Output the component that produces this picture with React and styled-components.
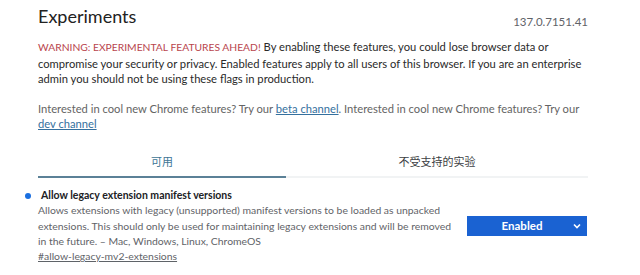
import React from "react";
import styled, { createGlobalStyle } from "styled-components";

const Global = createGlobalStyle`
  html, body { margin: 0; padding: 0; background: #fff; }
  body { font-family: Lato, "Noto Sans CJK SC", sans-serif; color: #202124; }
`;

const Page = styled.div`
  width: 550px;
  padding: 4px 0 0 38px;
`;

const Header = styled.div`
  display: flex;
  justify-content: space-between;
  align-items: flex-start;
`;

const Title = styled.h1`
  margin: 0;
  font-size: 18px;
  font-weight: 400;
  line-height: 24px;
  color: #222;
`;

const Version = styled.span`
  margin-top: 11px;
  font-size: 11.5px;
  line-height: 14px;
  color: #5f6368;
`;

const Para = styled.p`
  margin: ${(p) => p.$mt || 0}px 0 0;
  font-size: 11.2px;
  line-height: ${(p) => p.$lh || 15.5}px;
  color: ${(p) => (p.$muted ? "#646464" : "#2a2a2a")};
`;

const Warn = styled.span`
  font-size: 10.3px;
  color: #b9454d;
`;

const Link = styled.a`
  color: #35709e;
  text-decoration: underline;
`;

const Tabs = styled.div`
  display: flex;
  margin-top: 16.3px;
`;

const Tab = styled.div`
  flex: ${(p) => (p.$active ? "0 0 248px" : "1")};
  text-align: center;
  font-family: "Noto Sans CJK SC", sans-serif;
  font-size: 11px;
  line-height: 16px;
  padding: 6px 0 7px;
  color: ${(p) => (p.$active ? "#3d7595" : "#3c4043")};
  border-bottom: 2px solid ${(p) => (p.$active ? "#5b8197" : "#f1f3f4")};
`;

const Flag = styled.div`
  position: relative;
  display: flex;
  align-items: flex-start;
  gap: 11px;
  margin-top: 10.4px;
`;

const FlagBody = styled.div`
  width: 418px;
`;

const Dot = styled.span`
  position: absolute;
  left: -13px;
  top: 4.6px;
  width: 6px;
  height: 6px;
  border-radius: 50%;
  background: #1a6fe0;
`;

const FlagTitle = styled.div`
  font-size: 10.5px;
  font-weight: 700;
  line-height: 15px;
  margin-left: 3px;
  color: #202124;
`;

const FlagDesc = styled.div`
  font-size: 10.4px;
  line-height: 15.3px;
  color: #5f6368;
`;

const FlagLink = styled.a`
  display: block;
  font-size: 10.4px;
  line-height: 15.3px;
  color: #5f6368;
  text-decoration: underline;
`;

const Select = styled.div`
  width: 120px;
  height: 20px;
  margin-top: 27.6px;
  padding-right: 10px;
  box-sizing: border-box;
  background: #1a62d2;
  color: #fff;
  font-size: 11.5px;
  font-weight: 700;
  display: flex;
  align-items: center;
  justify-content: center;
  position: relative;
  flex-shrink: 0;
`;

const Chevron = styled.svg`
  position: absolute;
  right: 6px;
  top: 7px;
`;

export default function App() {
  return (
    <>
      <Global />
      <Page>
        <Header>
          <Title>Experiments</Title>
          <Version>137.0.7151.41</Version>
        </Header>
        <Para $mt={10.4}>
          <Warn>WARNING: EXPERIMENTAL FEATURES AHEAD!</Warn> By enabling these
          features, you could lose browser data or compromise your security or
          privacy. Enabled features apply to all users of this browser. If you
          are an enterprise admin you should not be using these flags in
          production.
        </Para>
        <Para $mt={13.8} $lh={15} $muted>
          Interested in cool new Chrome features? Try our{" "}
          <Link href="#">beta channel</Link>. Interested in cool new Chrome
          features? Try our <Link href="#">dev channel</Link>
        </Para>
        <Tabs>
          <Tab $active>可用</Tab>
          <Tab>不受支持的实验</Tab>
        </Tabs>
        <Flag>
          <Dot />
          <FlagBody>
            <FlagTitle>Allow legacy extension manifest versions</FlagTitle>
            <FlagDesc>
              Allows extensions with legacy (unsupported) manifest versions to be
              loaded as unpacked extensions. This should only be used for
              maintaining legacy extensions and will be removed in the future. –
              Mac, Windows, Linux, ChromeOS
            </FlagDesc>
            <FlagLink href="#">#allow-legacy-mv2-extensions</FlagLink>
          </FlagBody>
          <Select>
            Enabled
            <Chevron width="8" height="6" viewBox="0 0 8 6">
              <path d="M1 1.5 L4 4.5 L7 1.5" stroke="#fff" strokeWidth="1.6" fill="none" />
            </Chevron>
          </Select>
        </Flag>
      </Page>
    </>
  );
}
